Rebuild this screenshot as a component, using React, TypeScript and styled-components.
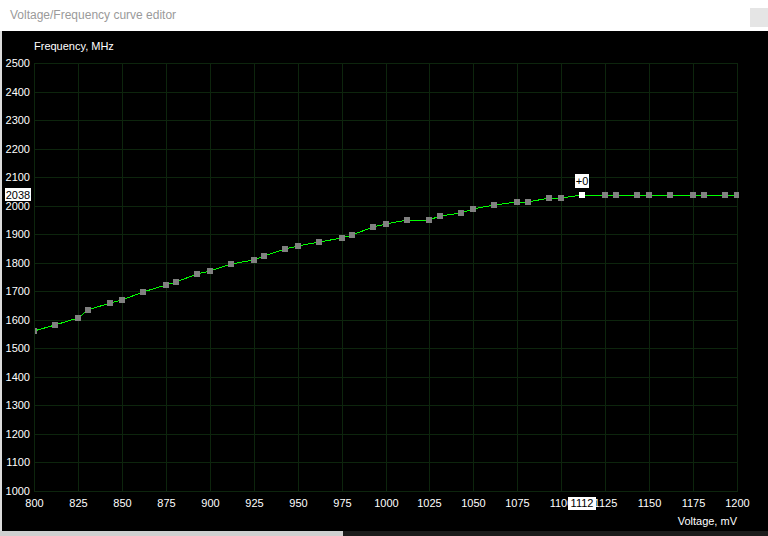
import React from "react";
import styled, { createGlobalStyle } from "styled-components";

const GlobalStyle = createGlobalStyle`
  html, body {
    margin: 0;
    padding: 0;
    background: #ffffff;
    overflow: hidden;
  }
`;

const Window = styled.div`
  display: flex;
  flex-direction: column;
  width: 768px;
  height: 536px;
  font-family: "Liberation Sans", Arial, sans-serif;
`;

const TitleBar = styled.div`
  display: flex;
  align-items: center;
  height: 31px;
  padding-left: 10px;
  background: #ffffff;
  box-sizing: border-box;
`;

const Title = styled.span`
  font-size: 12px;
  color: #9a9a9a;
  margin-top: -1px;
`;

const CloseButton = styled.div`
  margin-left: auto;
  margin-top: 4px;
  width: 18px;
  height: 19px;
  background: #e5e5e5;
`;

const Body = styled.div`
  display: flex;
  height: 500px;
`;

const Edge = styled.div`
  width: 2px;
  background: #dcdcdc;
`;

const ChartArea = styled.div`
  flex: 1;
  background: #000000;
  svg {
    display: block;
  }
`;

const Taskbar = styled.div`
  display: flex;
  height: 5px;
`;

const TaskbarPart = styled.div<{ $dark?: boolean; $width?: number }>`
  background: ${(p) => (p.$dark ? "#1c1c1c" : "#cfcfcf")};
  width: ${(p) => (p.$width ? `${p.$width}px` : "auto")};
  flex: ${(p) => (p.$width ? "none" : 1)};
`;

const Label = styled.text<{ $dark?: boolean }>`
  font-family: "Liberation Sans", Arial, sans-serif;
  font-size: 11px;
  fill: ${(p) => (p.$dark ? "#000000" : "#ffffff")};
`;

// plot rectangle in page pixels
const LEFT = 34;
const TOP = 63;
const WIDTH = 703;
const HEIGHT = 428;

const V_MIN = 800;
const V_MAX = 1200;
const F_MIN = 1000;
const F_MAX = 2500;

const px = (v: number) => LEFT + ((v - V_MIN) * WIDTH) / (V_MAX - V_MIN);
const py = (f: number) => TOP + ((F_MAX - f) * HEIGHT) / (F_MAX - F_MIN);

const curve: [number, number][] = [
  [800, 1560], [812, 1582], [825, 1607], [831, 1635], [843, 1660],
  [850, 1670], [862, 1698], [875, 1723], [881, 1733], [893, 1761],
  [900, 1772], [912, 1797], [925, 1810], [931, 1825], [943, 1848],
  [950, 1860], [962, 1873], [975, 1887], [981, 1898], [993, 1926],
  [1000, 1936], [1012, 1950], [1025, 1950], [1031, 1964], [1043, 1975],
  [1050, 1989], [1062, 2003], [1075, 2013], [1081, 2013], [1093, 2027],
  [1100, 2027], [1112, 2038], [1125, 2038], [1131, 2038], [1143, 2038],
  [1150, 2038], [1162, 2038], [1175, 2038], [1181, 2038], [1193, 2038],
  [1200, 2038],
];

const selected = { v: 1112, f: 2038, offset: 0 };

const vTicks = Array.from({ length: 17 }, (_, i) => V_MIN + i * 25);
const fTicks = Array.from({ length: 16 }, (_, i) => F_MIN + i * 100);

const GRID = "#0d250d";

const CurveChart = () => {
  const sx = Math.round(px(selected.v));
  const sy = Math.round(py(selected.f));
  const line = curve.map(([v, f]) => `${Math.round(px(v))},${Math.round(py(f))}`).join(" ");

  return (
    <svg width={766} height={500} viewBox="2 31 766 500">
      <defs>
        <clipPath id="plot">
          <rect x={LEFT + 1} y={TOP} width={WIDTH + 1} height={HEIGHT} />
        </clipPath>
      </defs>

      {/* grid */}
      {vTicks.map((v) => {
        const x = Math.round(px(v)) + 0.5;
        return <line key={v} x1={x} x2={x} y1={TOP} y2={TOP + HEIGHT} stroke={GRID} shapeRendering="crispEdges" />;
      })}
      {fTicks.map((f) => {
        const y = Math.round(py(f)) + 0.5;
        return <line key={f} x1={LEFT} x2={LEFT + WIDTH + 1} y1={y} y2={y} stroke={GRID} shapeRendering="crispEdges" />;
      })}

      {/* axis captions */}
      <Label x={34} y={50}>Frequency, MHz</Label>
      <Label x={737} y={525} textAnchor="end">Voltage, mV</Label>

      {fTicks.map((f) => (
        <Label key={f} x={30} y={Math.round(py(f)) + 4} textAnchor="end">
          {f}
        </Label>
      ))}
      {vTicks.map((v) => (
        <Label key={v} x={Math.round(px(v)) + 0.5} y={507} textAnchor="middle">
          {v}
        </Label>
      ))}

      {/* curve */}
      <g clipPath="url(#plot)">
        <polyline points={line} fill="none" stroke="#00ff00" strokeWidth={1} shapeRendering="crispEdges" />
        {curve.map(([v, f]) => {
          const isSel = v === selected.v;
          return (
            <rect
              key={v}
              x={Math.round(px(v)) - 3}
              y={Math.round(py(f)) - 3}
              width={6}
              height={6}
              fill={isSel ? "#ffffff" : "#808080"}
              shapeRendering="crispEdges"
            />
          );
        })}
      </g>

      {/* selected point readouts */}
      <rect x={sx - 7} y={174} width={14} height={14} fill="#ffffff" />
      <Label $dark x={sx} y={185} textAnchor="middle">
        {selected.offset >= 0 ? `+${selected.offset}` : selected.offset}
      </Label>

      <rect x={5} y={sy - 7} width={26} height={13} fill="#ffffff" />
      <Label $dark x={18} y={sy + 4} textAnchor="middle">
        {selected.f}
      </Label>

      <rect x={sx - 14} y={497} width={28} height={13} fill="#ffffff" />
      <Label $dark x={sx} y={507} textAnchor="middle">
        {selected.v}
      </Label>
    </svg>
  );
};

const App = () => (
  <>
    <GlobalStyle />
    <Window>
      <TitleBar>
        <Title>Voltage/Frequency curve editor</Title>
        <CloseButton />
      </TitleBar>
      <Body>
        <Edge />
        <ChartArea>
          <CurveChart />
        </ChartArea>
      </Body>
      <Taskbar>
        <TaskbarPart $width={343} />
        <TaskbarPart $dark />
      </Taskbar>
    </Window>
  </>
);

export default App;
